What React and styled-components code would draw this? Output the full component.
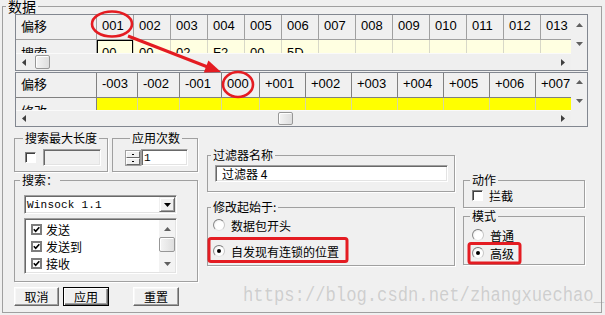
import styled, { createGlobalStyle } from "styled-components";

const CJK = `"Noto Sans CJK SC", "Liberation Sans", sans-serif`;
const GRID_FONT = `"Liberation Sans", "Noto Sans CJK SC", sans-serif`;

const GlobalStyle = createGlobalStyle`
  html, body {
    margin: 0;
    padding: 0;
    background: #f0f0f0;
  }
  body {
    overflow: hidden;
  }
`;

const Page = styled.div`
  position: relative;
  width: 605px;
  height: 315px;
  overflow: hidden;
  background: #f0f0f0;
  color: #000;
  font-family: ${CJK};
`;

const Outer = styled.fieldset`
  box-sizing: border-box;
  width: 600px;
  height: 313px;
  margin: 0 0 0 2px;
  padding: 0 3px;
  min-width: 0;
  border: 1px solid #a0a0a0;
`;

const OuterLegend = styled.legend`
  padding: 0 2px;
  font-family: ${CJK};
  font-size: 14px;
  line-height: 12px;
`;

/* ---------- data grids ---------- */

const GridFrame = styled.div`
  display: grid;
  grid-template-columns: 555px 16px;
  grid-template-rows: ${(p) => p.$body}px ${(p) => p.$scroll}px;
  width: 571px;
  margin: ${(p) => p.$mt}px 0 0 9px;
  border: 1px solid #828790;
  background: #fff;
`;

const Body = styled.div`
  overflow: hidden;
  background: #fff;
`;

const Row = styled.div`
  display: flex;
`;

const Cell = styled.div`
  box-sizing: border-box;
  flex: 0 0 ${(p) => p.$w}px;
  height: 25px;
  display: flex;
  align-items: center;
  padding: 0 0 ${(p) => (p.$head ? 3 : 0)}px 5px;
  background: ${(p) => p.$bg};
  border-right: 1px solid ${(p) => p.$line};
  border-bottom: 1px solid ${(p) => p.$line};
  font-family: ${GRID_FONT};
  font-size: 13px;
  white-space: nowrap;
  box-shadow: ${(p) => (p.$selected ? "inset 0 0 0 1px #000" : "none")};
`;

const VScroll = styled.div`
  display: flex;
  flex-direction: column;
  background: #f0f0f0;
`;

const HScroll = styled.div`
  display: flex;
  align-items: center;
  background: #efefef;
  border-top: 1px solid #fafafa;
`;

const Corner = styled.div`
  background: #f0f0f0;
`;

const ArrowBox = styled.div`
  display: flex;
  align-items: center;
  justify-content: center;
  flex: ${(p) => (p.$size ? `0 0 ${p.$size}px` : "1")};
`;

const Track = styled.div`
  flex: 1;
  display: flex;
  align-items: center;
  height: 100%;
`;

const Thumb = styled.div`
  box-sizing: border-box;
  width: ${(p) => p.$w}px;
  height: ${(p) => p.$h}px;
  margin-left: ${(p) => p.$x || 0}px;
  margin-top: ${(p) => p.$y || 0}px;
  border: 1px solid #979797;
  border-radius: 2px;
  background: linear-gradient(90deg, #f4f4f4, #dedede);
  box-shadow: inset 1px 1px 0 #fff;
`;

function Arrow({ dir, color = "#404040" }) {
  const pts = {
    left: "4,0 4,7 0,3.5",
    right: "0,0 0,7 4,3.5",
    up: "0,4 7,4 3.5,0",
    down: "0,0 7,0 3.5,4",
  }[dir];
  const horiz = dir === "left" || dir === "right";
  return (
    <svg width={horiz ? 4 : 7} height={horiz ? 7 : 4} viewBox={horiz ? "0 0 4 7" : "0 0 7 4"}>
      <polygon points={pts} fill={color} />
    </svg>
  );
}

function DataGrid({ cols, head, data, dataBg, line, dataLine, body, scroll, thumbX, mt }) {
  return (
    <GridFrame $body={body} $scroll={scroll} $mt={mt}>
      <Body>
        <Row>
          {head.map((h, i) => (
            <Cell key={i} $w={cols[i]} $bg="#f0f0f0" $line={line} $head>
              {h}
            </Cell>
          ))}
        </Row>
        <Row>
          {data.map((d, i) => (
            <Cell
              key={i}
              $w={cols[i]}
              $bg={i === 0 ? "#f0f0f0" : dataBg}
              $line={i === 0 ? line : dataLine}
              $selected={d.sel}
            >
              {d.t}
            </Cell>
          ))}
        </Row>
      </Body>
      <VScroll>
        <ArrowBox>
          <Arrow dir="up" color="#606060" />
        </ArrowBox>
        <ArrowBox>
          <Arrow dir="down" color="#606060" />
        </ArrowBox>
      </VScroll>
      <HScroll>
        <ArrowBox $size={16}>
          <Arrow dir="left" />
        </ArrowBox>
        <Track>
          <Thumb $w={15} $h={scroll - 3} $x={thumbX} />
        </Track>
        <ArrowBox $size={16}>
          <Arrow dir="right" />
        </ArrowBox>
      </HScroll>
      <Corner />
    </GridFrame>
  );
}

const grid1Cols = [81, ...Array(13).fill(37)];
const grid1Head = ["偏移", ...Array.from({ length: 13 }, (_, i) => String(i + 1).padStart(3, "0"))];
const grid1Data = [
  { t: "搜索" },
  { t: "00", sel: true },
  { t: "00" },
  { t: "02" },
  { t: "F2" },
  { t: "00" },
  { t: "5D" },
  ...Array(7).fill({ t: "" }),
];

const grid2Cols = [81, 41, 42, 42, 38, 46, 46, 46, 46, 46, 46, 46];
const grid2Head = ["偏移", "-003", "-002", "-001", "000", "+001", "+002", "+003", "+004", "+005", "+006", "+007"];
const grid2Data = [{ t: "修改" }, ...Array(11).fill({ t: "" })];

/* ---------- lower panel ---------- */

const Bottom = styled.div`
  display: flex;
  margin: 3px 0 0 8px;
`;

const Column = styled.div`
  display: flex;
  flex-direction: column;
  width: ${(p) => p.$w}px;
  padding-top: ${(p) => p.$top}px;
  margin-left: ${(p) => p.$ml || 0}px;
  gap: ${(p) => p.$gap}px;
`;

const PairRow = styled.div`
  display: flex;
  gap: 4px;
`;

const Group = styled.fieldset`
  box-sizing: border-box;
  width: ${(p) => (p.$w ? `${p.$w}px` : "auto")};
  height: ${(p) => p.$h}px;
  margin: 0;
  padding: 0;
  min-width: 0;
  border: 1px solid #a0a0a0;
  box-shadow: 1px 1px 0 #fff;
`;

const Legend = styled.legend`
  margin-left: ${(p) => p.$ml}px;
  padding: 0 2px;
  font-family: ${CJK};
  font-size: 12px;
  line-height: 12px;
`;

const Inner = styled.div`
  display: flex;
  flex-direction: ${(p) => (p.$col ? "column" : "row")};
  align-items: ${(p) => (p.$col ? "flex-start" : "center")};
  gap: ${(p) => p.$gap || 0}px;
  padding: ${(p) => p.$pad};
`;

const TextBox = styled.div`
  box-sizing: border-box;
  width: ${(p) => p.$w}px;
  height: ${(p) => p.$h}px;
  display: flex;
  align-items: center;
  padding-left: ${(p) => p.$pl || 2}px;
  background: ${(p) => (p.$disabled ? "#f0f0f0" : "#fff")};
  border: 1px solid;
  border-color: #a0a0a0 #fff #fff #a0a0a0;
  box-shadow: inset 1px 1px 0 #696969, inset -1px -1px 0 #e3e3e3;
  font-family: ${(p) => (p.$mono ? `"Liberation Mono", monospace` : CJK)};
  font-size: ${(p) => (p.$mono ? 11 : 12)}px;
  white-space: nowrap;
`;

const Spin = styled.div`
  box-sizing: border-box;
  display: flex;
  flex-direction: column;
  width: 16px;
  height: 16px;
  border: 1px solid #a0a0a0;
  background: #fff;
`;

const SpinBtn = styled.div`
  flex: 1;
  display: flex;
  align-items: center;
  justify-content: center;
  background: #f0f0f0;
  border: 1px solid;
  border-color: #fff #696969 #696969 #fff;
  &::after {
    content: "";
    width: 2px;
    height: 1px;
    background: #000;
  }
`;

const Combo = styled(TextBox)`
  justify-content: space-between;
  padding-right: 1px;
  letter-spacing: 0.2px;
`;

const DropBtn = styled.div`
  box-sizing: border-box;
  width: 16px;
  height: 15px;
  display: flex;
  align-items: center;
  justify-content: center;
  background: #f0f0f0;
  border: 1px solid;
  border-color: #f0f0f0 #696969 #696969 #f0f0f0;
  box-shadow: inset 1px 1px 0 #fff, inset -1px -1px 0 #a0a0a0;
`;

const ListBox = styled.div`
  box-sizing: border-box;
  display: flex;
  width: 153px;
  height: 56px;
  background: #fff;
  border: 1px solid;
  border-color: #a0a0a0 #fff #fff #a0a0a0;
  box-shadow: inset 1px 1px 0 #696969, inset -1px -1px 0 #e3e3e3;
`;

const ListItems = styled.div`
  flex: 1;
  display: flex;
  flex-direction: column;
  padding: 2px 0 0 6px;
`;

const ListScroll = styled.div`
  display: flex;
  flex-direction: column;
  width: 16px;
  margin: 1px 1px 1px 0;
  background: #f3f3f3;
`;

const ListArrow = styled.div`
  flex: 0 0 17px;
  display: flex;
  align-items: center;
  justify-content: center;
`;

const ListTrack = styled.div`
  flex: 1;
`;

const Option = styled.div`
  display: flex;
  align-items: center;
  gap: ${(p) => p.$gap}px;
  height: ${(p) => p.$h || 18}px;
  font-family: ${CJK};
  font-size: 12px;
  white-space: nowrap;
`;

const Check = styled.span`
  box-sizing: border-box;
  flex: none;
  display: flex;
  align-items: center;
  justify-content: center;
  width: 11px;
  height: 11px;
  background: #fff;
  border: ${(p) => (p.$flat ? "2px solid #7d7d7d" : "1px solid")};
  border-color: ${(p) => (p.$flat ? "#7d7d7d" : "#808080 #fff #fff #808080")};
  box-shadow: ${(p) => (p.$flat ? "none" : "inset 1px 1px 0 #404040")};
`;

const Radio = styled.span`
  box-sizing: border-box;
  flex: none;
  display: flex;
  align-items: center;
  justify-content: center;
  width: 12px;
  height: 12px;
  border-radius: 50%;
  background: radial-gradient(circle at 60% 60%, #fff 45%, #e4e4e4 100%);
  border: 1px solid;
  border-color: #7a7a7a #c8c8c8 #e6e6e6 #8a8a8a;
  &::after {
    content: "";
    display: ${(p) => (p.$on ? "block" : "none")};
    width: 4px;
    height: 4px;
    border-radius: 50%;
    background: #000;
  }
`;

const ButtonRow = styled.div`
  display: flex;
  margin-top: 3px;
`;

const Btn = styled.button`
  box-sizing: border-box;
  width: ${(p) => p.$w}px;
  height: 19px;
  margin-left: ${(p) => p.$ml || 0}px;
  padding: 0;
  background: #f0f0f0;
  color: #000;
  font-family: ${CJK};
  font-size: 12px;
  line-height: 12px;
  border: 1px solid;
  border-color: ${(p) => (p.$default ? "#000" : "#fff #696969 #696969 #fff")};
  box-shadow: ${(p) =>
    p.$default
      ? "inset 1px 1px 0 #fff, inset -1px -1px 0 #696969, inset -2px -2px 0 #a0a0a0"
      : "inset -1px -1px 0 #a0a0a0, inset 1px 1px 0 #f8f8f8"};
`;

const Watermark = styled.div`
  position: absolute;
  left: 243px;
  top: 288px;
  font-family: "Liberation Mono", monospace;
  font-size: 17.2px;
  line-height: 20px;
  color: rgba(150, 150, 150, 0.38);
  white-space: nowrap;
  transform: scaleY(1.2);
  transform-origin: left bottom;
  pointer-events: none;
`;

const Marks = styled.svg`
  position: absolute;
  left: 0;
  top: 0;
  pointer-events: none;
`;

function Tick() {
  return (
    <svg width="7" height="7" viewBox="0 0 7 7">
      <path d="M0.8 3.2 L2.7 5.2 L6.3 1.2" fill="none" stroke="#000" strokeWidth="1.6" />
    </svg>
  );
}

export default function App() {
  return (
    <Page>
      <GlobalStyle />
      <Outer>
        <OuterLegend>数据</OuterLegend>
        <DataGrid
          cols={grid1Cols}
          head={grid1Head}
          data={grid1Data}
          dataBg="#ffffe1"
          line="#a0a0a0"
          dataLine="#d8d8c8"
          body={38}
          scroll={17}
          thumbX={3}
          mt={2}
        />
        <DataGrid
          cols={grid2Cols}
          head={grid2Head}
          data={grid2Data}
          dataBg="#ffff00"
          line="#808080"
          dataLine="#d8d8a0"
          body={37}
          scroll={16}
          thumbX={246}
          mt={1}
        />
        <Bottom>
          <Column $w={184} $top={2} $gap={2}>
            <PairRow>
              <Group $w={94} $h={40}>
                <Legend $ml={8}>搜索最大长度</Legend>
                <Inner $pad="5px 0 0 10px" $gap={7}>
                  <Check />
                  <TextBox $w={58} $h={17} $disabled />
                </Inner>
              </Group>
              <Group $w={86} $h={40}>
                <Legend $ml={17}>应用次数</Legend>
                <Inner $pad="5px 0 0 12px">
                  <Spin>
                    <SpinBtn />
                    <SpinBtn />
                  </Spin>
                  <TextBox $w={47} $h={17} $pl={2} $mono>
                    1
                  </TextBox>
                </Inner>
              </Group>
            </PairRow>
            <Group $h={108}>
              <Legend $ml={5}>搜索：</Legend>
              <Inner $col $pad="9px 0 0 9px" $gap={4}>
                <Combo $w={153} $h={19} $pl={2} $mono>
                  Winsock 1.1
                  <DropBtn>
                    <Arrow dir="down" color="#000" />
                  </DropBtn>
                </Combo>
                <ListBox>
                  <ListItems>
                    {["发送", "发送到", "接收"].map((t) => (
                      <Option key={t} $gap={4} $h={17}>
                        <Check $flat>
                          <Tick />
                        </Check>
                        {t}
                      </Option>
                    ))}
                  </ListItems>
                  <ListScroll>
                    <ListArrow>
                      <Arrow dir="up" color="#606060" />
                    </ListArrow>
                    <Thumb $w={16} $h={15} />
                    <ListTrack />
                    <ListArrow>
                      <Arrow dir="down" color="#606060" />
                    </ListArrow>
                  </ListScroll>
                </ListBox>
              </Inner>
            </Group>
            <ButtonRow>
              <Btn $w={45}>取消</Btn>
              <Btn $w={46} $ml={4} $default>
                应用
              </Btn>
              <Btn $w={46} $ml={24}>
                重置
              </Btn>
            </ButtonRow>
          </Column>

          <Column $w={248} $ml={9} $top={19} $gap={9}>
            <Group $h={43}>
              <Legend $ml={3}>过滤器名称</Legend>
              <Inner $pad="4px 0 0 7px">
                <TextBox $w={233} $h={17} $pl={6}>
                  过滤器 4
                </TextBox>
              </Inner>
            </Group>
            <Group $h={65}>
              <Legend $ml={3}>修改起始于:</Legend>
              <Inner $col $pad="3px 0 0 5px" $gap={8}>
                <Option $gap={6}>
                  <Radio />
                  数据包开头
                </Option>
                <Option $gap={6}>
                  <Radio $on />
                  自发现有连锁的位置
                </Option>
              </Inner>
            </Group>
          </Column>

          <Column $w={122} $ml={8} $top={44} $gap={2}>
            <Group $h={34}>
              <Legend $ml={6}>动作</Legend>
              <Inner $pad="0 0 0 8px">
                <Option $gap={6}>
                  <Check />
                  拦截
                </Option>
              </Inner>
            </Group>
            <Group $h={55}>
              <Legend $ml={6}>模式</Legend>
              <Inner $col $pad="4px 0 0 8px">
                <Option $gap={6}>
                  <Radio />
                  普通
                </Option>
                <Option $gap={6}>
                  <Radio $on />
                  高级
                </Option>
              </Inner>
            </Group>
          </Column>
        </Bottom>
      </Outer>

      <Watermark>https://blog.csdn.net/zhangxuechao_</Watermark>

      <Marks width="605" height="315" viewBox="0 0 605 315">
        <g fill="none" stroke="#e41c22" strokeWidth="2.6">
          <ellipse cx="112" cy="24" rx="20" ry="12.5" />
          <ellipse cx="238" cy="84.5" rx="15" ry="12.5" />
          <line x1="128" y1="36" x2="209" y2="67.5" strokeWidth="3" />
          <rect x="209" y="238.5" width="138" height="23" rx="2" strokeWidth="3" />
          <rect x="469" y="243.5" width="51" height="19.5" rx="2" strokeWidth="3" />
        </g>
        <polygon points="221,72 203.8,72.6 208.4,60.6" fill="#e41c22" />
      </Marks>
    </Page>
  );
}
